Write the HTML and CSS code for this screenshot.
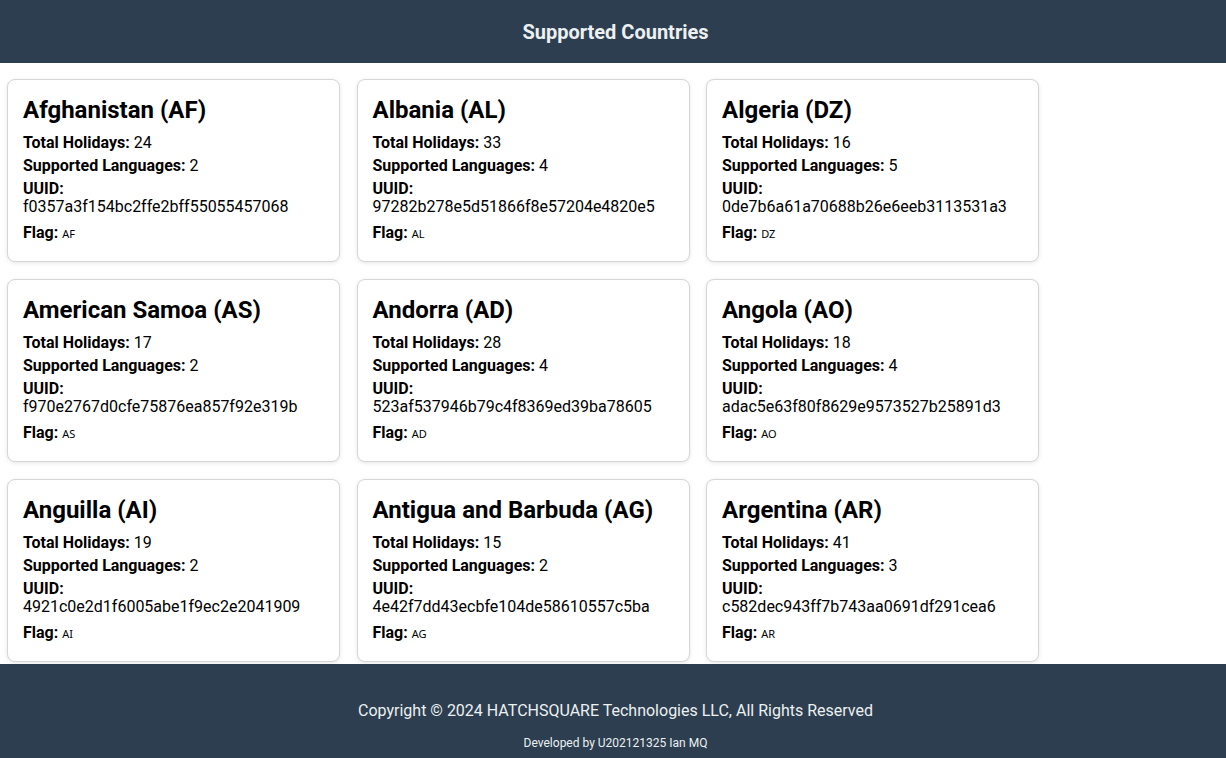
FILE: index.html
```html
<!DOCTYPE html>
<html lang="en">
<head>
<meta charset="utf-8">
<title>Supported Countries</title>
<link rel="stylesheet" href="styles.css">
</head>
<body>
<header class="site-header">
  <h1 class="site-title">Supported Countries</h1>
</header>
<main class="content">
  <div class="grid">
    <article class="card">
      <h2 class="card-title">Afghanistan (AF)</h2>
      <p class="row"><strong>Total Holidays:</strong> 24</p>
      <p class="row"><strong>Supported Languages:</strong> 2</p>
      <p class="row"><strong>UUID:</strong><br>f0357a3f154bc2ffe2bff55055457068</p>
      <p class="row flag-row"><strong>Flag:</strong> <span class="flag">AF</span></p>
    </article>
    <article class="card">
      <h2 class="card-title">Albania (AL)</h2>
      <p class="row"><strong>Total Holidays:</strong> 33</p>
      <p class="row"><strong>Supported Languages:</strong> 4</p>
      <p class="row"><strong>UUID:</strong><br>97282b278e5d51866f8e57204e4820e5</p>
      <p class="row flag-row"><strong>Flag:</strong> <span class="flag">AL</span></p>
    </article>
    <article class="card">
      <h2 class="card-title">Algeria (DZ)</h2>
      <p class="row"><strong>Total Holidays:</strong> 16</p>
      <p class="row"><strong>Supported Languages:</strong> 5</p>
      <p class="row"><strong>UUID:</strong><br>0de7b6a61a70688b26e6eeb3113531a3</p>
      <p class="row flag-row"><strong>Flag:</strong> <span class="flag">DZ</span></p>
    </article>
    <article class="card">
      <h2 class="card-title">American Samoa (AS)</h2>
      <p class="row"><strong>Total Holidays:</strong> 17</p>
      <p class="row"><strong>Supported Languages:</strong> 2</p>
      <p class="row"><strong>UUID:</strong><br>f970e2767d0cfe75876ea857f92e319b</p>
      <p class="row flag-row"><strong>Flag:</strong> <span class="flag">AS</span></p>
    </article>
    <article class="card">
      <h2 class="card-title">Andorra (AD)</h2>
      <p class="row"><strong>Total Holidays:</strong> 28</p>
      <p class="row"><strong>Supported Languages:</strong> 4</p>
      <p class="row"><strong>UUID:</strong><br>523af537946b79c4f8369ed39ba78605</p>
      <p class="row flag-row"><strong>Flag:</strong> <span class="flag">AD</span></p>
    </article>
    <article class="card">
      <h2 class="card-title">Angola (AO)</h2>
      <p class="row"><strong>Total Holidays:</strong> 18</p>
      <p class="row"><strong>Supported Languages:</strong> 4</p>
      <p class="row"><strong>UUID:</strong><br>adac5e63f80f8629e9573527b25891d3</p>
      <p class="row flag-row"><strong>Flag:</strong> <span class="flag">AO</span></p>
    </article>
    <article class="card">
      <h2 class="card-title">Anguilla (AI)</h2>
      <p class="row"><strong>Total Holidays:</strong> 19</p>
      <p class="row"><strong>Supported Languages:</strong> 2</p>
      <p class="row"><strong>UUID:</strong><br>4921c0e2d1f6005abe1f9ec2e2041909</p>
      <p class="row flag-row"><strong>Flag:</strong> <span class="flag">AI</span></p>
    </article>
    <article class="card">
      <h2 class="card-title">Antigua and Barbuda (AG)</h2>
      <p class="row"><strong>Total Holidays:</strong> 15</p>
      <p class="row"><strong>Supported Languages:</strong> 2</p>
      <p class="row"><strong>UUID:</strong><br>4e42f7dd43ecbfe104de58610557c5ba</p>
      <p class="row flag-row"><strong>Flag:</strong> <span class="flag">AG</span></p>
    </article>
    <article class="card">
      <h2 class="card-title">Argentina (AR)</h2>
      <p class="row"><strong>Total Holidays:</strong> 41</p>
      <p class="row"><strong>Supported Languages:</strong> 3</p>
      <p class="row"><strong>UUID:</strong><br>c582dec943ff7b743aa0691df291cea6</p>
      <p class="row flag-row"><strong>Flag:</strong> <span class="flag">AR</span></p>
    </article>
  </div>
</main>
<footer class="site-footer">
  <p class="copyright">Copyright © 2024 HATCHSQUARE Technologies LLC, All Rights Reserved</p>
  <p class="credit">Developed by U202121325 Ian MQ</p>
</footer>
</body>
</html>
```

FILE: styles.css
```css
html, body {
  margin: 0;
  padding: 0;
}

body {
  font-family: Roboto, "Liberation Sans", Arial, sans-serif;
  color: #000;
  background: #fff;
}

.site-header {
  background: #2c3e50;
  height: 63px;
  padding-left: 5px;
  display: flex;
  align-items: center;
  justify-content: center;
}

.site-title {
  margin: 0;
  font-size: 20px;
  font-weight: 700;
  color: #ecf0f1;
}

.content {
  padding: 16px 7px 2px;
}

.grid {
  display: grid;
  grid-template-columns: repeat(3, 333px);
  column-gap: 16.5px;
  row-gap: 17px;
}

.card {
  border: 1px solid #d6d6d6;
  border-radius: 8px;
  padding: 16px 15px 13px;
  box-shadow: 0 1px 4px rgba(0, 0, 0, 0.1);
  background: #fff;
}

.card-title {
  margin: 0 0 10px;
  font-size: 24px;
  font-weight: 700;
  line-height: normal;
}

.row {
  margin: 5px 0;
  font-size: 16px;
  line-height: 18px;
}

.row strong {
  font-weight: 700;
}

.flag-row {
  margin-top: 7px;
  line-height: 20px;
}

.flag {
  font-family: "Noto Sans", "DejaVu Sans", sans-serif;
  font-size: 11px;
  line-height: 11px;
}

.site-footer {
  background: #2c3e50;
  color: #ecf0f1;
  text-align: center;
  padding: 1px 0 6px 5px;
}

.copyright {
  margin: 37px 0 0;
  font-size: 16px;
  line-height: 18px;
}

.credit {
  margin: 14px 0 0;
  font-size: 12px;
  line-height: 18px;
}
```
